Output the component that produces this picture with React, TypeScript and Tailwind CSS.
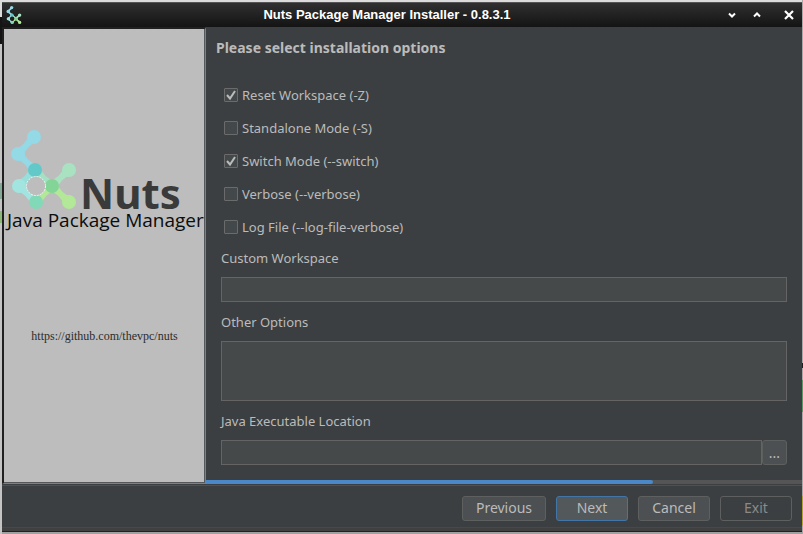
import { useState } from "react";

const OPTIONS = [
  { id: "reset", label: "Reset Workspace (-Z)", on: true },
  { id: "standalone", label: "Standalone Mode (-S)", on: false },
  { id: "switch", label: "Switch Mode (--switch)", on: true },
  { id: "verbose", label: "Verbose (--verbose)", on: false },
  { id: "logfile", label: "Log File (--log-file-verbose)", on: false },
];

type Point = [number, number];

// Outline of a neck that narrows between two round nodes of radius 7.
function neck([ax, ay]: Point, [bx, by]: Point) {
  const length = Math.hypot(bx - ax, by - ay);
  const nx = (-(by - ay) / length) * 6;
  const ny = ((bx - ax) / length) * 6;
  const mx = (ax + bx) / 2;
  const my = (ay + by) / 2;
  return `M${ax + nx} ${ay + ny}Q${mx} ${my} ${bx + nx} ${by + ny}L${bx - nx} ${by - ny}Q${mx} ${my} ${ax - nx} ${ay - ny}Z`;
}

const BONDS: { from: Point; to: Point; color: string }[] = [
  { from: [34, 17], to: [18, 34], color: "#93d9e6" },
  { from: [18, 34], to: [35, 50], color: "#93d9e6" },
  { from: [35, 50], to: [19, 66], color: "#98dedb" },
  { from: [19, 66], to: [36, 82], color: "#a2e5e0" },
  { from: [35, 50], to: [52, 66], color: "#a3e0c4" },
  { from: [52, 66], to: [36, 82], color: "#b2e898" },
  { from: [52, 66], to: [69, 50], color: "#a9e2c1" },
  { from: [52, 66], to: [69, 82], color: "#b2e898" },
];

const NODES: { at: Point; color: string }[] = [
  { at: [34, 17], color: "#93d9e6" },
  { at: [18, 34], color: "#93d9e6" },
  { at: [19, 66], color: "#a2e5e0" },
  { at: [35, 50], color: "#62c9c8" },
  { at: [52, 66], color: "#83d597" },
  { at: [36, 82], color: "#82d9b8" },
  { at: [69, 50], color: "#a9e2c1" },
  { at: [69, 82], color: "#b2e898" },
];

function Molecule({ hole, ring }: { hole: string; ring: string }) {
  return (
    <g>
      {BONDS.map(({ from, to, color }) => (
        <g key={`${from}-${to}`} fill={color} stroke={color}>
          <path d={neck(from, to)} stroke="none" />
          <path d={`M${from}L${to}`} strokeWidth="5" />
        </g>
      ))}
      {NODES.map(({ at, color }) => (
        <circle key={`${at}`} cx={at[0]} cy={at[1]} r="7" fill={color} />
      ))}
      <circle cx="36" cy="66" r="9.5" fill={hole} stroke={ring} strokeWidth="1" strokeDasharray="2 1" />
    </g>
  );
}

function TitleBar() {
  return (
    <header className="flex h-[25px] shrink-0 items-center border-t border-[#555555] bg-linear-to-b from-[#303030] to-[#141414] pl-1">
      <svg className="h-5 w-4" viewBox="9 6 70 87" aria-hidden="true">
        <Molecule hole="#202020" ring="none" />
      </svg>
      <h1 className="flex-1 pl-7 text-center font-['Liberation_Sans',Arial,sans-serif] text-[13px] leading-4 font-bold text-white">
        Nuts Package Manager Installer - 0.8.3.1
      </h1>
      <div className="flex items-center gap-[9px] pr-[5px]">
        <button type="button" aria-label="Minimize" className="size-4">
          <svg viewBox="0 0 16 16" fill="none" stroke="#fff" strokeWidth="2">
            <path d="M5 6.5L8 9.5L11 6.5" />
          </svg>
        </button>
        <button type="button" aria-label="Maximize" className="size-4">
          <svg viewBox="0 0 16 16" fill="none" stroke="#fff" strokeWidth="2">
            <path d="M5 9.5L8 6.5L11 9.5" />
          </svg>
        </button>
        <button type="button" aria-label="Close" className="ml-[7px] size-4">
          <svg viewBox="0 0 16 16" fill="none" stroke="#fff" strokeWidth="2.2">
            <path d="M4 4L12 12M12 4L4 12" />
          </svg>
        </button>
      </div>
    </header>
  );
}

function SidePanel() {
  return (
    <aside className="flex w-[204px] shrink-0 flex-col items-center border-t-2 border-r border-b border-l-2 border-t-[#202020] border-r-[#7b8184] border-b-[#7b8184] border-l-[#202020] bg-[#bdbdbd] pt-[91px] shadow-[inset_-1px_-1px_0_#55595b]">
      <svg className="h-[120px] w-full" viewBox="0 0 201 120" aria-label="Nuts Java Package Manager">
        <g transform="translate(-4 0)">
          <Molecule hole="#bdbdbd" ring="#eef7f2" />
        </g>
        <text x="76" y="89" fontSize="42" fontWeight="700" fill="#3a3a3a" fontFamily="'Noto Sans', sans-serif">
          Nuts
        </text>
        <text x="3" y="107" fontSize="19" fill="#0c0c0c" fontFamily="'Open Sans', sans-serif">
          Java Package Manager
        </text>
      </svg>
      <a
        href="https://github.com/thevpc/nuts"
        className="mt-[88px] font-['Liberation_Serif','Times_New_Roman',serif] text-[12px] leading-4 text-[#2c2c2c]"
      >
        https://github.com/thevpc/nuts
      </a>
    </aside>
  );
}

function Option({ id, label, on }: { id: string; label: string; on: boolean }) {
  const [checked, setChecked] = useState(on);
  return (
    <div className="flex h-[33px] items-center gap-1">
      <span className="grid size-[14px]">
        <input
          id={id}
          type="checkbox"
          checked={checked}
          onChange={(e) => setChecked(e.target.checked)}
          className="col-start-1 row-start-1 size-[14px] appearance-none rounded-[1px] border border-[#6b6b6b] bg-[#43494a]"
        />
        {checked && (
          <svg
            viewBox="0 0 14 14"
            className="pointer-events-none col-start-1 row-start-1 size-[14px]"
            fill="none"
            stroke="#bbbbbb"
            strokeWidth="2"
          >
            <path d="M3 7L6 10.5L11 3" />
          </svg>
        )}
      </span>
      <label htmlFor={id}>{label}</label>
    </div>
  );
}

const field = "w-full border border-[#646464] bg-[#45494a] px-1.5 outline-none";
const button = "h-[25px] rounded-[3px] border text-[14px]";

export default function App() {
  return (
    <div className="flex h-screen bg-[#a8a8a8] font-['Noto_Sans',sans-serif] text-[13px] leading-5 text-[#bbbbbb]">
      <div className="flex w-0.5 shrink-0 flex-col bg-[#c4c4c4]" aria-hidden="true">
        <div className="h-[17px] bg-[#dcdcdc]" />
        <div className="h-[27px] bg-[#141414]" />
        <div className="mt-[139px] h-4 bg-[#86a997]" />
        <div className="mt-3 h-3 bg-[#8cb878]" />
      </div>
      <div className="flex min-w-0 flex-1 flex-col border-t-2 border-b-2 border-t-[#dcdcdc] border-b-[#a0a0a0] bg-[#3c3f41]">
        <TitleBar />
        <div className="flex min-h-0 flex-1">
          <SidePanel />
          <main className="flex min-w-0 flex-1 flex-col">
            <h2 className="pt-[11px] pl-[10px] text-[14px] font-bold">Please select installation options</h2>
            <div className="flex flex-1 flex-col px-[15px]">
              <div className="pt-5 pl-[3px]">
                {OPTIONS.map((o) => (
                  <Option key={o.id} {...o} />
                ))}
              </div>
              <label htmlFor="workspace" className="mt-[5px]">
                Custom Workspace
              </label>
              <input id="workspace" type="text" className={`${field} mt-[9px] h-[25px]`} />
              <label htmlFor="other" className="mt-[10px]">
                Other Options
              </label>
              <textarea id="other" className={`${field} mt-[9px] h-[60px] resize-none`} />
              <label htmlFor="java" className="mt-[10px]">
                Java Executable Location
              </label>
              <div className="mt-[9px] flex">
                <input id="java" type="text" className={`${field} h-[25px] min-w-0 flex-1`} />
                <button
                  type="button"
                  aria-label="Browse"
                  className={`${button} w-[25px] border-[#5e6060] bg-[#4c5052]`}
                >
                  ...
                </button>
              </div>
            </div>
            <div
              role="progressbar"
              aria-label="Installation progress"
              aria-valuenow={75}
              className="h-1 bg-[#555555]"
            >
              <div className="h-full w-3/4 rounded-r-[2px] bg-[#4a88c7]" />
            </div>
          </main>
        </div>
        <footer className="mt-px flex h-[43px] shrink-0 items-center justify-end gap-2.5 border-t border-b border-t-[#515151] border-b-[#484848] pt-[3px] pr-2.5">
          <button type="button" className={`${button} w-[84px] border-[#5e6060] bg-[#4c5052]`}>
            Previous
          </button>
          <button type="button" className={`${button} w-[72px] border-[#4276a8] bg-[#53585a]`}>
            Next
          </button>
          <button type="button" className={`${button} w-[72px] border-[#5e6060] bg-[#4c5052]`}>
            Cancel
          </button>
          <button type="button" disabled className={`${button} w-[72px] border-[#5e6060] text-[#8a8a8a]`}>
            Exit
          </button>
        </footer>
        <div className="h-1 shrink-0 border-b border-[#202020] bg-[#404040]" />
      </div>
      <div className="flex w-px shrink-0 flex-col justify-end bg-[#a8a8a8]" aria-hidden="true">
        <div className="h-[5px] bg-[#202020]" />
        <div className="mt-3 mb-[84px] h-8 bg-[#5c9a68]" />
        <div className="mb-[9px] h-[29px] bg-[#b5a62c]" />
      </div>
    </div>
  );
}
